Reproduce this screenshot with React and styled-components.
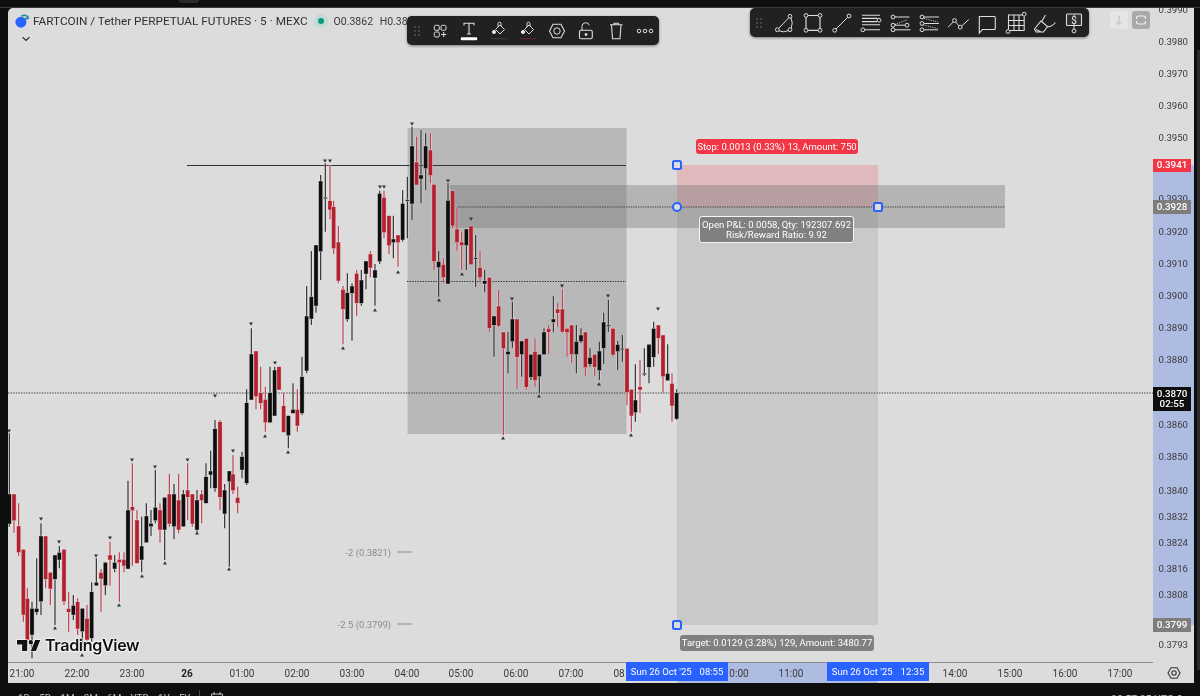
import React from "react";
import styled, { createGlobalStyle } from "styled-components";

const GlobalStyle = createGlobalStyle`
  html, body { margin: 0; padding: 0; background: #0e0e0e; }
  body { font-family: "Roboto", "Noto Sans", sans-serif; }
`;

/* [x, bodyTop, bodyBottom, wickTop, wickBottom, colour] in 3x crop units */
const groupA = [
  [28,222,312,40,320,"b"],[42,222,302,222,338,"r"],[56,318,398,250,408,"r"],[70,388,585,388,605,"r"],
  [82,535,660,505,680,"r"],[96,565,645,545,715,"b"],[110,565,577,415,585,"b"],[123,348,545,310,585,"b"],
  [137,348,478,348,505,"r"],[151,457,507,457,555,"r"],[165,405,478,405,615,"b"],[178,397,420,378,445,"b"],
  [192,388,545,388,555,"r"],[206,565,577,515,635,"r"],[220,556,585,525,600,"b"],[233,545,627,535,645,"r"],
  [247,565,635,565,690,"b"],[261,595,660,555,665,"r"],[275,515,655,487,665,"b"],[289,487,497,415,497,"b"],
  [303,457,477,447,575,"r"],[316,427,497,427,525,"b"],[330,405,420,365,497,"r"],[344,427,447,405,457,"b"],
  [358,418,428,397,545,"r"],[372,418,438,397,457,"r"],[384,270,447,182,447,"b"],[397,260,272,130,437,"r"],
  [411,300,430,270,430,"r"],[425,378,420,290,457,"b"],[439,288,368,250,368,"b"],[453,310,320,270,348,"b"],
  [466,262,302,150,310,"b"],[480,270,330,250,368,"r"],[494,232,330,232,420,"b"],[508,222,312,162,320,"r"],
  [522,222,320,192,358,"b"],[536,240,330,162,340,"r"],[550,222,320,210,320,"b"],[563,210,232,130,300,"r"],
  [577,222,312,222,320,"r"],[591,240,330,210,335,"b"],[605,222,242,210,310,"r"],[618,170,250,130,250,"b"],
  [632,153,165,92,205,"b"],[645,26,205,0,215,"b"],[660,5,232,0,270,"r"],[674,210,282,192,325,"b"],
  [688,153,185,153,440,"b"],[699,162,212,105,222,"r"],[713,232,250,200,280,"r"],
];
const groupB = [
  [186,920,960,905,985,"b"],[200,758,1000,718,1005,"b"],[214,612,750,535,750,"b"],[228,603,740,603,778,"r"],[242,728,760,650,778,"r"],
  [256,748,818,710,845,"r"],[270,728,818,650,818,"b"],[284,660,798,650,798,"b"],[297,650,720,650,720,"r"],
  [311,767,847,728,847,"r"],[325,797,857,797,895,"b"],[339,778,790,700,790,"b"],[352,778,828,718,845,"r"],
  [366,680,790,620,795,"b"],[380,498,663,408,670,"b"],[394,440,507,303,525,"b"],[408,285,468,285,488,"b"],
  [422,93,305,75,390,"b"],[436,142,146,40,245,"b"],[450,152,180,45,208,"r"],[461,170,296,152,312,"r"],
  [475,276,393,228,400,"r"],[489,418,478,408,583,"r"],[502,428,508,370,515,"b"],[516,408,430,400,572,"b"],
  [530,370,460,360,497,"r"],[544,390,460,360,467,"b"],[558,333,372,333,418,"b"],[571,312,354,303,382,"r"],
  [585,360,384,342,467,"b"],[599,130,335,122,342,"b"],[612,142,248,122,265,"r"],[627,197,287,197,312,"r"],
  [640,267,278,197,325,"b"],[654,255,278,255,350,"r"],
];
const groupC = [
  [8,250,360,210,365,"b"],[22,239,242,170,355,"b"],[36,78,252,20,300,"b"],[50,126,195,50,195,"r"],
  [63,165,177,30,250,"b"],[77,78,146,40,210,"b"],[91,90,167,40,190,"r"],[102,193,425,193,450,"r"],
  [116,424,443,393,530,"b"],[130,433,473,415,490,"r"],[144,241,492,190,492,"b"],[158,212,318,212,325,"r"],
  [171,327,368,262,392,"r"],[185,366,377,335,450,"r"],[199,327,377,327,450,"b"],[213,318,434,318,434,"r"],
  [227,413,415,345,500,"b"],[240,442,473,393,488,"r"],[254,482,492,450,517,"b"],[268,472,625,472,635,"r"],
  [282,588,616,588,710,"b"],[296,558,618,510,622,"r"],[310,636,686,636,945,"r"],[324,694,704,636,760,"b"],
  [337,597,665,545,683,"b"],[351,597,712,597,807,"r"],[365,663,704,663,770,"b"],[379,655,802,655,810,"r"],
  [393,703,772,703,780,"b"],[405,694,782,655,800,"r"],[418,703,770,703,820,"b"],[432,636,704,625,704,"b"],
  [446,625,637,615,703,"r"],[460,597,607,528,637,"b"],[473,567,580,548,620,"r"],[487,567,636,508,640,"r"],
  [501,625,638,625,710,"r"],[515,615,704,615,730,"r"],[529,664,704,615,760,"b"],[543,645,665,625,670,"b"],
  [556,636,743,636,768,"r"],[570,712,733,685,740,"b"],[584,703,742,703,768,"r"],[598,693,752,665,780,"b"],
  [611,606,685,578,732,"b"],[625,615,617,540,635,"b"],[639,625,705,625,710,"r"],[653,673,695,663,750,"b"],
  [667,685,687,645,725,"b"],[681,685,818,685,855,"r"],[694,808,888,808,935,"r"],[706,840,878,733,905,"b"],
  [720,800,810,720,878,"r"],[733,760,762,685,768,"b"],[747,673,742,673,790,"b"],[761,625,712,605,740,"b"],
  [775,615,655,615,702,"r"],[789,645,770,645,818,"r"],[803,760,782,673,782,"b"],[816,790,858,760,905,"r"],
  [830,818,897,808,900,"b"],
];
const toPage = (rows, ox, oy) =>
  rows.map(([x, bt, bb, wt, wb, c]) => ({
    x: ox + x / 3, bt: oy + bt / 3, bb: oy + bb / 3, wt: oy + wt / 3, wb: oy + wb / 3, c,
  }));
const candles = [...toPage(groupA, 0, 420), ...toPage(groupB, 180, 150), ...toPage(groupC, 400, 120)];

const pivotsDown = [
  [412,124],[448,181],[471,219],[512,299],[562,286],[608,296],[658,309],[251,324],[215,396],[233,451],[187.5,460],[325,161],[330,161],
  [380,187],[384,187],[275,363],[9,431],[41,519],[59,542],[96,556],[110,538],[132,460],[155,467],
];
const pivotsUp = [
  [439,300],[462,274],[503,438],[539,396],[599,384],[631,435],[265,436],[288,452],[343,348],[375,310],[398,272],
  [55,628],[82,655],[119,605],[142,576],[165,563],[197,533],[229,569],[32,668],
];

const priceTicks = [
  ["0.3990",10],["0.3980",42],["0.3970",74],["0.3960",106],["0.3950",138],["0.3930",199],["0.3920",232],
  ["0.3910",264],["0.3900",296],["0.3890",328],["0.3880",360],["0.3860",425],["0.3850",457],["0.3840",491],
  ["0.3832",517],["0.3824",543],["0.3816",569],["0.3808",595],["0.3793",645],
];
const timeTicks = [
  ["21:00",22],["22:00",77],["23:00",132],["26",187,true],["01:00",242],["02:00",297],["03:00",352],["04:00",407],
  ["05:00",461],["06:00",516],["07:00",571],["08",619],["11:00",791],["14:00",955],["15:00",1010],["16:00",1065],["17:00",1120],
];

const Page = styled.div`
  width: 1200px; height: 696px; overflow: hidden; background: #0e0e0e;
  display: flex; flex-direction: column; position: relative; filter: blur(0.3px);
`;
const TopStrip = styled.div`
  height: 8px; flex: none; display: flex; justify-content: center; box-sizing: border-box;
  border-bottom: 1px solid #3a3a3a;
`;
const TopPill = styled.div`
  width: 20px; height: 3px; margin-left: -822px; background: #2b2b2b; border-radius: 0 0 4px 4px;
`;
const Middle = styled.div`flex: 1; display: flex; min-height: 0;`;
const LeftGutter = styled.div`width: 8px; flex: none; background: #0e0e0e;`;
const RightGutter = styled.div`width: 6px; flex: none; background: #0e0e0e; display: flex; justify-content: flex-end;`;
const ScrollThumb = styled.div`width: 3px; height: 620px; margin-top: 42px; background: #2c2c2c;`;
const Pane = styled.div`
  flex: 1; display: grid; grid-template-columns: 1145px 41px; grid-template-rows: 654px 21px;
  background: #dcdcdc; border-radius: 5px 0 0 0; overflow: hidden; position: relative;
`;
const Canvas = styled.div`position: relative; overflow: hidden;`;
const ChartSvg = styled.svg`position: absolute; inset: 0; display: block;`;
const PriceAxis = styled.div`position: relative; overflow: hidden;`;
const TimeAxis = styled.div`position: relative; border-top: 1px solid #8c8c8c; color: #3a3a3a;`;
const Corner = styled.div`display: flex; align-items: center; justify-content: center; border-top: 1px solid #dcdcdc;`;
const AxisBand = styled.div.attrs((p) => ({ style: { left: p.$x, width: p.$w, top: p.$top, height: p.$h } }))`
  position: absolute; background: #aebce2;
`;
const PriceTick = styled.span.attrs((p) => ({ style: { top: p.$y - 8 } }))`
  position: absolute; left: 5.5px; font-size: 9.6px; color: #3b3b3b; line-height: 1;
  transform: translateY(-50%);
`;
const PriceTag = styled.div.attrs((p) => ({ style: { top: p.$y - 8, height: p.$h } }))`
  position: absolute; left: 0; width: 38px; background: ${(p) => p.$bg}; color: #fff;
  font-size: 9.8px; font-weight: 500; line-height: 10.5px; display: flex; flex-direction: column;
  align-items: center; justify-content: center;
`;
const TimeTick = styled.span.attrs((p) => ({ style: { left: p.$x - 8 } }))`
  position: absolute; top: 5px; transform: translateX(-50%); font-size: 10px; line-height: 11px;
  font-weight: ${(p) => (p.$bold ? 700 : 400)}; color: ${(p) => (p.$bold ? "#222" : "#3b3b3b")};
`;
const TimeFlag = styled.span.attrs((p) => ({ style: { left: p.$x - 8 } }))`
  position: absolute; top: -1px; width: 102px; height: 19px; background: #2962ff; color: #fff;
  display: flex; align-items: center; justify-content: center; gap: 8px; font-size: 9.5px;
`;
const BottomBar = styled.div`
  height: 13px; flex: none; background: #0e0e0e; position: relative; overflow: hidden; color: #b8b8b8; font-size: 10px;
`;
const RangeList = styled.div`
  display: flex; gap: 9px; position: absolute; left: 18px; top: 10px; align-items: center;
`;
const RangeSep = styled.div`width: 1px; height: 7px; background: #444; position: absolute; left: 199px; top: 7px;`;
const BottomIcon = styled.svg`position: absolute; left: 210px; top: 8px;`;
const Clock = styled.span`position: absolute; left: 1111px; top: 10px; white-space: nowrap; font-size: 10.5px;`;

const Legend = styled.div`
  position: absolute; left: 7px; top: 5px; display: flex; align-items: center; gap: 3px; color: #303030;
`;
const Title = styled.span`font: 400 11.8px/16px "Roboto", sans-serif; white-space: nowrap;`;
const StatusDot = styled.span`
  width: 14px; height: 14px; border-radius: 50%; background: #c3d9d5; margin-left: 3px;
  display: flex; align-items: center; justify-content: center;
  &::after { content: ""; width: 6px; height: 6px; border-radius: 50%; background: #089981; }
`;
const Ohlc = styled.span`font-size: 10.5px; margin-left: 3px; white-space: nowrap; color: #3a3a3a; word-spacing: 4px;`;
const LegendToggle = styled.svg`position: absolute; left: 13px; top: 28px;`;

const Toolbar = styled.div`
  position: absolute; display: flex; align-items: center; background: #212121; border-radius: 5px;
  box-shadow: 0 1px 3px rgba(0,0,0,.45); color: #dedede; box-sizing: border-box;
`;
const DrawBar = styled(Toolbar)`left: 399px; top: 8px; width: 252px; height: 29px; padding-left: 4px;`;
const ShapeBar = styled(Toolbar)`left: 742px; top: 0; width: 339px; height: 29px; padding-left: 3px;`;
const ToolIcon = styled.svg`
  flex: none; fill: none; stroke: currentColor; stroke-width: 1; margin-left: ${(p) => p.$ml ?? 1}px;
`;
const AxisButtons = styled.div`position: absolute; left: 1102px; top: 3px; display: flex; gap: 4px;`;
const SoftButton = styled.div`
  width: 18px; height: 18px; border-radius: 3px; background: ${(p) => (p.$solid ? "#a9a9a9" : "#e5e5e5")};
  display: flex; align-items: center; justify-content: center; color: ${(p) => (p.$solid ? "#f1f1f1" : "#b9b9b9")};
`;

const Logo = styled.div`
  position: absolute; left: 9px; top: 628px; display: flex; align-items: center; gap: 4px; color: #111;
`;
const LogoWord = styled.span`
  font: 600 16.1px/18px "Inter", sans-serif; letter-spacing: -0.35px;
  text-shadow: 0 0 2px #fff, 0 0 2px #fff, 0 0 2px #fff, 0 0 3px #fff;
`;
const LogoMark = styled.svg`fill: #111; stroke: #fff; stroke-width: 1.6; paint-order: stroke; overflow: visible;`;

const FibLabel = styled.div.attrs((p) => ({ style: { top: p.$y - 8 } }))`
  position: absolute; right: 741px; transform: translateY(-50%); display: flex; align-items: center; gap: 6px;
  color: #8b8b8b; font-size: 9.4px; white-space: nowrap;
  &::after { content: ""; width: 15px; height: 1px; background: #8b8b8b; }
`;
const RiskTag = styled.div.attrs((p) => ({ style: { left: p.$x - 8, top: p.$y - 8, width: p.$w, height: p.$h } }))`
  position: absolute; box-sizing: border-box; border-radius: 3px; background: ${(p) => p.$bg}; color: #fff;
  border: ${(p) => (p.$ring ? "1px solid #f5f5f5" : "0")}; font-size: 9.5px; line-height: 9.5px; text-align: center;
  display: flex; flex-direction: column; align-items: center; justify-content: center; white-space: nowrap;
`;
const Handle = styled.div.attrs((p) => ({ style: { left: p.$x - 8, top: p.$y - 8 } }))`
  position: absolute; width: 6px; height: 6px; box-sizing: content-box; transform: translate(-50%, -50%);
  background: #dcdcdc; border: 2px solid #2962ff; border-radius: ${(p) => (p.$round ? "50%" : "2.5px")};
`;

const Dot = ({ x, y, r = 1.9 }) => <circle cx={x} cy={y} r={r} />;

const Icon = ({ children, ml, size = 28 }) => (
  <ToolIcon $ml={ml} width={size} height={28} viewBox={`0 0 ${size} 28`}>{children}</ToolIcon>
);

const Grip = () => (
  <Icon size={12} ml={0}>
    {[10,14,18].flatMap((y) => [4,8].map((x) => <circle key={x+"-"+y} cx={x} cy={y} r=".8" fill="#777" stroke="none" />))}
  </Icon>
);

const bucket = (tone) => (
  <g>
    <path d="M10.5 12.5L15 8l4.5 4.5-4.5 4.5z" />
    <path d="M13 9.8V6.7a1.5 1.5 0 0 1 3 0V9" />
    <circle cx="9" cy="15" r="1.6" fill="#eee" />
    <path d="M6.5 21.7h15" stroke={tone} strokeDasharray="1 1" strokeWidth="1.2" />
  </g>
);

const drawIcons = [
  <g key="w"><rect x="8.3" y="8.3" width="5" height="5" rx="1.3"/><rect x="15" y="8.3" width="5" height="5" rx="1.3"/><rect x="8.3" y="15" width="5" height="5" rx="1.3"/><path d="M17.7 15v5M15.2 17.5h5"/></g>,
  <g key="t"><path d="M9 8.5V6.3h10v2.2M14 6.3v10.7M12 17h4" strokeWidth="1.1"/><rect x="5.7" y="20.3" width="16.6" height="3" rx="1.3" fill="#fff" stroke="none"/></g>,
  <g key="b1">{bucket("#555")}</g>,
  <g key="b2">{bucket("#a3262f")}</g>,
  <g key="h"><path d="M6.5 14L10 7.2h8l3.5 6.8-3.5 6.8h-8z" strokeWidth="1.1"/><circle cx="14" cy="14" r="3.2"/></g>,
  <g key="l"><rect x="7.5" y="13.3" width="12.8" height="8.4" rx="1.5" strokeWidth="1.1"/><path d="M10 13.3V9.5a3.8 3.8 0 0 1 7.4-1.2"/><circle cx="14" cy="17.5" r="1" fill="#ddd"/></g>,
  <g key="tr"><path d="M8 7.8h12.5M12 7.8V6.2h4.5v1.6M9.5 7.8l1 13.9h7.5l1-13.9" strokeWidth="1.1"/></g>,
  <g key="m"><circle cx="8" cy="14" r="1.8"/><circle cx="14" cy="14" r="1.8"/><circle cx="20" cy="14" r="1.8"/></g>,
];

const shapeIcons = [
  <g key="1"><Dot x="20" y="7.3"/><Dot x="7.3" y="20.7"/><Dot x="20" y="20.7"/><path d="M18.8 8.8L8.6 19.4M9 21.8q5 2.2 9.3-.2M21 9q2.4 5 .2 10"/></g>,
  <g key="2"><Dot x="7" y="6.5"/><Dot x="21" y="6.5"/><Dot x="7" y="21.3"/><Dot x="21" y="21.3"/><path d="M9 6.5h10M9 21.3h10M7 8.4v11M21 8.4v11" strokeWidth="1.2"/></g>,
  <g key="3"><Dot x="6.7" y="21.3"/><Dot x="21" y="7"/><path d="M8 20L19.7 8.3"/></g>,
  <g key="4"><Dot x="22" y="11.2"/><Dot x="5.8" y="20.8"/><path d="M5 6.2h18M5 9.4h15.5M5 12.6h15M5 15.8h18M8 20.8h15" strokeWidth="1.1"/></g>,
  <g key="5"><Dot x="7" y="8"/><Dot x="7" y="16.2"/><Dot x="21" y="16.2"/><Dot x="7" y="20.8"/><path d="M9 8h14.5M9 16.2h10M9 20.8h15.5"/><path d="M9 15.5L22 10.5" strokeDasharray="1 1.3"/></g>,
  <g key="6"><Dot x="7" y="8"/><Dot x="7" y="14.5"/><Dot x="7" y="20.8"/><path d="M9 8h15M9 14.5h15M9 20.8h14"/><path d="M8.5 16l14 3.5M9 9.5l14 3.5" strokeDasharray="1 1.3"/></g>,
  <g key="7"><Dot x="10.5" y="11.5"/><Dot x="16.2" y="18.2"/><path d="M4 18.3l5.2-5.3M11.7 13l3.2 3.7M17.6 17l7.2-6.5"/></g>,
  <g key="8"><path d="M6.3 7.5h15a1 1 0 0 1 1 1v11a1 1 0 0 1-1 1H9.5L6.3 24z" strokeWidth="1.1"/></g>,
  <g key="9"><Dot x="22.2" y="5.2"/><Dot x="6" y="22.5"/><path d="M6 6h15M6 11.5h16.5M6 16.5h16.5M7.5 21.5h15M6.5 6v14.5M12 6v15.5M17 6v15.5M22.2 7.5v14" strokeWidth="1.1"/></g>,
  <g key="10"><path d="M14.5 6l-3.7 6.2M10 12l6.5 5.5-4 5.5H5l-1.5-3zM16.5 18c3-.3 6-2 8-4.5M5 20.5l5 2.5" strokeWidth="1.1"/></g>,
  <g key="11"><rect x="6.5" y="5" width="15" height="11.5" rx="1" fill="#e8e8e8" fillOpacity=".08" strokeWidth="1.1"/><text x="14" y="14.5" textAnchor="middle" fontSize="10" fill="#eee" stroke="none" fontFamily="Roboto">$</text><path d="M14 16.5v3.5"/><Dot x="14" y="22"/></g>,
];

const Chart = () => (
  <ChartSvg width="1145" height="654" viewBox="8 8 1145 654">
    <rect x="407.5" y="128" width="219" height="306" fill="#b8b8b8" />
    <rect x="677" y="207" width="201" height="418" fill="#c9c9c9" />
    <rect x="677" y="165" width="201" height="42" fill="#e0b9bd" />
    <rect x="450" y="185" width="555" height="43" fill="#6e6e6e" fillOpacity=".36" />
    <path d="M187 165.5H626" stroke="#333" strokeWidth="1" />
    <path d="M407 281.5H626" stroke="#333" strokeDasharray="1.4 1.2" strokeWidth="1" />
    <path d="M458 207H1005" stroke="#444" strokeDasharray="1.4 1" strokeWidth="1" />
    <path d="M8 393H1153" stroke="#444" strokeDasharray="1.4 1.2" strokeWidth="1" />
    <g>
      {candles.map((k, i) => {
        const dark = k.c === "b";
        return (
          <g key={i}>
            <path d={`M${k.x} ${k.wt}V${k.wb}`} stroke="#fff" strokeOpacity=".45" strokeWidth="2.4" />
            <path d={`M${k.x} ${k.wt}V${k.wb}`} stroke={dark ? "#2e2e2e" : "#bb3c4a"} strokeWidth="1.2" />
            <rect
              x={k.x - 2.1} y={k.bt} width={4.2} height={Math.max(k.bb - k.bt, 1.4)}
              fill={dark ? "#0e0e0e" : "#b3212f"} stroke="#f4f4f4" strokeOpacity=".6" strokeWidth=".6"
            />
          </g>
        );
      })}
      {pivotsDown.map(([x, y], i) => <path key={i} d={`M${x - 2} ${y - 1.5}h4l-2 3.2z`} fill="#333" />)}
      {pivotsUp.map(([x, y], i) => <path key={i} d={`M${x - 2} ${y + 1.5}h4l-2-3.2z`} fill="#333" />)}
    </g>
  </ChartSvg>
);

export default function App() {
  return (
    <Page>
      <GlobalStyle />
      <TopStrip><TopPill /></TopStrip>
      <Middle>
        <LeftGutter />
        <Pane>
          <Canvas>
            <Chart />
            <Legend>
              <svg width="15" height="16" viewBox="0 0 15 16">
                <circle cx="5.9" cy="9.2" r="5.5" fill="#2962ff" />
                <path d="M7 3a4.5 4.5 0 0 1 6.5 2M9.5 6a2.4 2.4 0 0 1 2.8-.2" fill="none" stroke="#1d8f99" strokeWidth="1.6" strokeLinecap="round" />
              </svg>
              <Title>FARTCOIN / Tether PERPETUAL FUTURES · 5 · MEXC</Title>
              <StatusDot />
              <Ohlc>O0.3862 H0.3870</Ohlc>
            </Legend>
            <LegendToggle width="10" height="6" viewBox="0 0 10 6">
              <path d="M1.5 1.2L5 4.4l3.5-3.2" fill="none" stroke="#222" strokeWidth="1.1" />
            </LegendToggle>
            <DrawBar>
              <Grip />
              {drawIcons.map((ic, i) => <Icon key={i} ml={i === 0 ? 3 : 1.3}>{ic}</Icon>)}
            </DrawBar>
            <ShapeBar>
              <Grip />
              {shapeIcons.map((ic, i) => <Icon key={i} ml={i === 0 ? 5 : 1}>{ic}</Icon>)}
            </ShapeBar>
            <AxisButtons>
              <SoftButton>
                <svg width="10" height="12" viewBox="0 0 10 12"><path d="M5 1.5v8.5M2 7.5L5 10.5 8 7.5" fill="none" stroke="currentColor" /></svg>
              </SoftButton>
              <SoftButton $solid>
                <svg width="12" height="12" viewBox="0 0 12 12"><path d="M1.5 5V4a2 2 0 0 1 2-2h5a2 2 0 0 1 2 2v1M10.5 7v1a2 2 0 0 1-2 2h-5a2 2 0 0 1-2-2V7" fill="none" stroke="currentColor" strokeWidth="1.2" /></svg>
              </SoftButton>
            </AxisButtons>
            <Logo>
              <LogoMark width="24" height="15" viewBox="0 6 33 15">
                <path d="M14 6H0v6h7v9h7V6zm12 15h-7l6-15h7l-6 15zm-7-9a3 3 0 1 0 0-6 3 3 0 0 0 0 6z" />
              </LogoMark>
              <LogoWord>TradingView</LogoWord>
            </Logo>
            <FibLabel $y={552}>-2 (0.3821)</FibLabel>
            <FibLabel $y={624}>-2.5 (0.3799)</FibLabel>
            <RiskTag $x={696} $y={139} $w={162} $h={15} $bg="#f23645">Stop: 0.0013 (0.33%) 13, Amount: 750</RiskTag>
            <RiskTag $x={699} $y={216} $w={155} $h={27} $bg="#808080" $ring>
              <span>Open P&amp;L: 0.0058, Qty: 192307.692</span>
              <span>Risk/Reward Ratio: 9.92</span>
            </RiskTag>
            <RiskTag $x={680} $y={635} $w={194} $h={16} $bg="#808080">Target: 0.0129 (3.28%) 129, Amount: 3480.77</RiskTag>
            <Handle $x={677} $y={165} />
            <Handle $x={677} $y={207} $round />
            <Handle $x={878} $y={207} />
            <Handle $x={677} $y={625} />
          </Canvas>
          <PriceAxis>
            <AxisBand $x={0} $w={41} $top={157} $h={460} />
            {priceTicks.map(([t, y]) => <PriceTick key={t} $y={y}>{t}</PriceTick>)}
            <PriceTag $y={159} $h={13} $bg="#f23645">0.3941</PriceTag>
            <PriceTag $y={200} $h={14} $bg="#7d7d7d">0.3928</PriceTag>
            <PriceTag $y={387} $h={24} $bg="#0e0e0e"><span>0.3870</span><span>02:55</span></PriceTag>
            <PriceTag $y={618} $h={14} $bg="#7d7d7d">0.3799</PriceTag>
          </PriceAxis>
          <TimeAxis>
            <AxisBand $x={669} $w={201} $top={0} $h={21} />
            {timeTicks.map(([t, x, b]) => <TimeTick key={t} $x={x} $bold={b}>{t}</TimeTick>)}
            <TimeTick $x={739}>0:00</TimeTick>
            <TimeFlag $x={626}><span>Sun 26 Oct '25</span><span>08:55</span></TimeFlag>
            <TimeFlag $x={827}><span>Sun 26 Oct '25</span><span>12:35</span></TimeFlag>
          </TimeAxis>
          <Corner>
            <svg width="14" height="14" viewBox="0 0 14 14"><path d="M4 1.8h6L13 7l-3 5.2H4L1 7z" fill="none" stroke="#333" strokeWidth="1.1" /><circle cx="7" cy="7" r="2.2" fill="none" stroke="#333" strokeWidth="1.1" /></svg>
          </Corner>
        </Pane>
        <RightGutter><ScrollThumb /></RightGutter>
      </Middle>
      <BottomBar>
        <RangeList><span>1D</span><span>5D</span><span>1M</span><span>3M</span><span>6M</span><span>YTD</span><span>1Y</span><span>5Y</span></RangeList>
        <RangeSep />
        <BottomIcon width="14" height="14" viewBox="0 0 14 14"><path d="M1.5 3h11v10h-11zM4 1v3M10 1v3" fill="none" stroke="#bbb" /></BottomIcon>
        <Clock>08:57:05 UTC-8</Clock>
      </BottomBar>
    </Page>
  );
}
